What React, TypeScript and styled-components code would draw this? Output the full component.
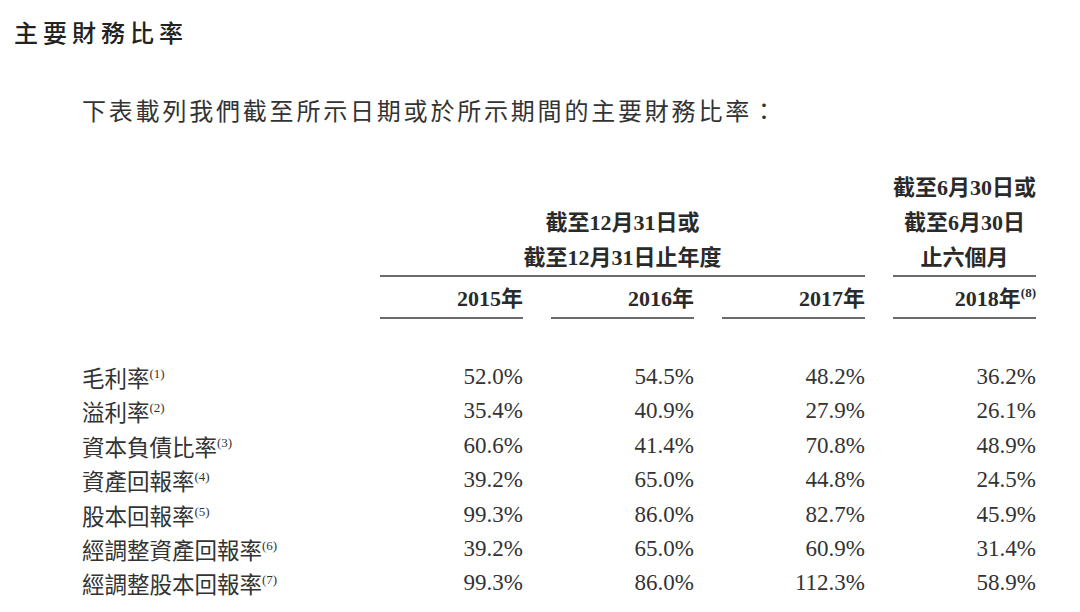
import React from "react";
import styled, { createGlobalStyle } from "styled-components";

const Global = createGlobalStyle`
  html, body { margin: 0; padding: 0; background: #ffffff; }
  body {
    font-family: "Liberation Serif", "Noto Sans CJK TC", serif;
    color: #2f2f2f;
  }
`;

const Page = styled.div`
  width: 1080px;
  height: 612px;
  overflow: hidden;
  background: #fff;
`;

const Title = styled.h1`
  margin: 0;
  padding: 16px 0 0 14px;
  font-family: "Noto Sans CJK TC", sans-serif;
  font-weight: 500;
  font-size: 24px;
  line-height: 32px;
  letter-spacing: 5px;
  color: #222;
`;

const Intro = styled.p`
  margin: 46px 0 0 0;
  padding-left: 82px;
  font-family: "Noto Sans CJK TC", sans-serif;
  font-weight: 400;
  font-size: 24px;
  line-height: 32px;
  letter-spacing: 2.8px;
  color: #333;
`;

const Table = styled.div`
  display: grid;
  grid-template-columns: 352px repeat(4, 143px);
  column-gap: 28px;
  margin-top: 44px;
`;

const Rule = "2px solid #6b6b6b";

const GroupHead = styled.div<{ $span: string }>`
  grid-column: ${(p) => p.$span};
  align-self: end;
  text-align: center;
  font-family: "Liberation Serif", "Noto Sans CJK TC", serif;
  font-weight: 700;
  font-size: 22px;
  line-height: 35px;
  border-bottom: ${Rule};
  color: #2a2a2a;
`;

const HeadLine = styled.div`
  white-space: nowrap;
`;

const YearCell = styled.div<{ $col: number }>`
  grid-column: ${(p) => p.$col};
  text-align: right;
  font-weight: 700;
  font-size: 22px;
  line-height: 36px;
  padding-top: 4px;
  border-bottom: ${Rule};
  color: #2a2a2a;
  white-space: nowrap;
`;

const Spacer = styled.div`
  grid-column: 1 / -1;
  height: 41px;
`;

const Label = styled.div`
  grid-column: 1;
  padding-left: 82px;
  font-family: "Noto Sans CJK TC", sans-serif;
  font-size: 22.5px;
  line-height: 34.4px;
  white-space: nowrap;
  color: #333;
`;

const Value = styled.div`
  text-align: right;
  font-family: "Liberation Serif", serif;
  font-size: 23px;
  line-height: 34.4px;
  color: #333;
`;

const Sup = styled.span<{ $bold?: boolean }>`
  font-family: "Liberation Serif", serif;
  font-size: 13px;
  font-weight: ${(p) => (p.$bold ? 700 : 400)};
  line-height: 0;
  vertical-align: 9px;
  letter-spacing: 0;
`;

const rows: { label: string; note: number; values: string[] }[] = [
  { label: "毛利率", note: 1, values: ["52.0%", "54.5%", "48.2%", "36.2%"] },
  { label: "溢利率", note: 2, values: ["35.4%", "40.9%", "27.9%", "26.1%"] },
  { label: "資本負債比率", note: 3, values: ["60.6%", "41.4%", "70.8%", "48.9%"] },
  { label: "資產回報率", note: 4, values: ["39.2%", "65.0%", "44.8%", "24.5%"] },
  { label: "股本回報率", note: 5, values: ["99.3%", "86.0%", "82.7%", "45.9%"] },
  { label: "經調整資產回報率", note: 6, values: ["39.2%", "65.0%", "60.9%", "31.4%"] },
  { label: "經調整股本回報率", note: 7, values: ["99.3%", "86.0%", "112.3%", "58.9%"] },
];

export default function App() {
  return (
    <Page>
      <Global />
      <Title>主要財務比率</Title>
      <Intro>下表載列我們截至所示日期或於所示期間的主要財務比率：</Intro>
      <Table>
        <GroupHead $span="2 / 5">
          <HeadLine>截至12月31日或</HeadLine>
          <HeadLine>截至12月31日止年度</HeadLine>
        </GroupHead>
        <GroupHead $span="5 / 6">
          <HeadLine>截至6月30日或</HeadLine>
          <HeadLine>截至6月30日</HeadLine>
          <HeadLine>止六個月</HeadLine>
        </GroupHead>
        <YearCell $col={2}>2015年</YearCell>
        <YearCell $col={3}>2016年</YearCell>
        <YearCell $col={4}>2017年</YearCell>
        <YearCell $col={5}>
          2018年<Sup $bold>(8)</Sup>
        </YearCell>
        <Spacer />
        {rows.map((r) => (
          <React.Fragment key={r.label}>
            <Label>
              {r.label}
              <Sup>({r.note})</Sup>
            </Label>
            {r.values.map((v, i) => (
              <Value key={i}>{v}</Value>
            ))}
          </React.Fragment>
        ))}
      </Table>
    </Page>
  );
}
